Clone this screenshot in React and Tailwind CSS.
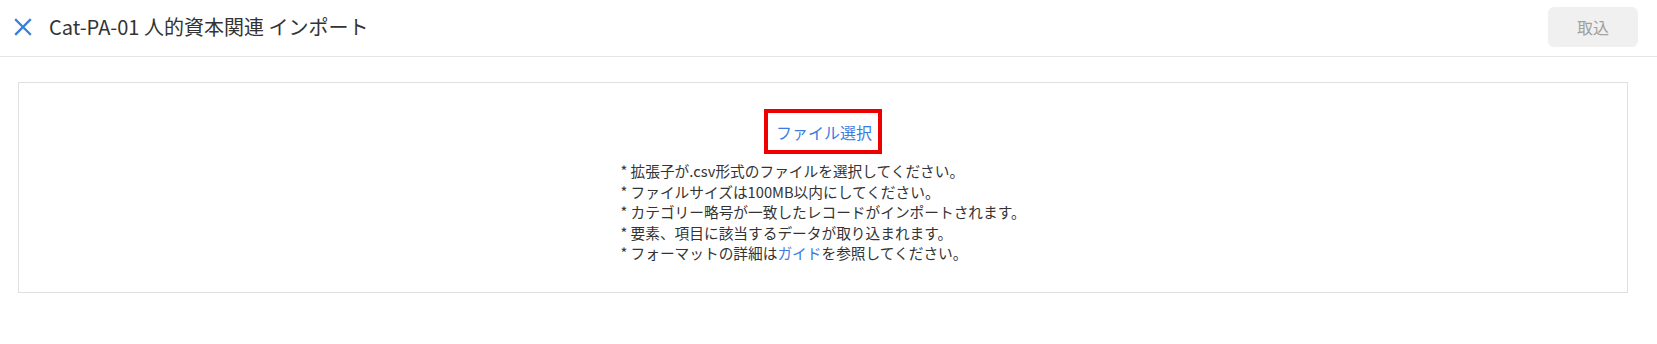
import React from "react";

const notes = [
  "拡張子が.csv形式のファイルを選択してください。",
  "ファイルサイズは100MB以内にしてください。",
  "カテゴリー略号が一致したレコードがインポートされます。",
  "要素、項目に該当するデータが取り込まれます。",
];

const CloseIcon = () => (
  <svg width="18" height="18" viewBox="0 0 18 18" fill="none">
    <path d="M2 2 16 16 M16 2 2 16" stroke="#3b7ddd" strokeWidth="2.3" strokeLinecap="square" />
  </svg>
);

export default function App() {
  return (
    <div
      className="w-full min-h-screen bg-white text-[#333]"
      style={{ fontFamily: '"Noto Sans CJK JP", "Noto Sans", sans-serif' }}
    >
      {/* header */}
      <div className="h-[57px] flex items-center border-b border-[#e4e4e4] pl-[14px] pr-[19px]">
        <button className="flex items-center justify-center w-[18px] h-[18px] mt-[-2px]">
          <CloseIcon />
        </button>
        <h1 className="ml-[17px] text-[20px] leading-[28px] text-[#333] mt-[-3px]">
          Cat-PA-01 人的資本関連 インポート
        </h1>
        <button className="ml-auto w-[90px] h-[40px] rounded-md bg-[#f0f0f0] text-[16px] text-[#a0a0a0] mt-[-2px]">
          取込
        </button>
      </div>

      {/* upload area */}
      <div className="ml-[18px] mr-[29px] mt-[25px] h-[211px] border border-[#e0e0e0] flex flex-col items-center pt-[26px]">
        <div className="w-[118px] h-[45px] border-4 border-[#ee0000] flex items-center justify-center">
          <span className="text-[16px] leading-6 text-[#3d7be0] ml-[2px]">ファイル選択</span>
        </div>
        <ul className="mt-[7px] text-[14.7px] leading-[20.5px] text-[#333]">
          {notes.map((n) => (
            <li key={n}>* {n}</li>
          ))}
          <li>
            * フォーマットの詳細は<span className="text-[#3d7be0]">ガイド</span>を参照してください。
          </li>
        </ul>
      </div>
    </div>
  );
}
